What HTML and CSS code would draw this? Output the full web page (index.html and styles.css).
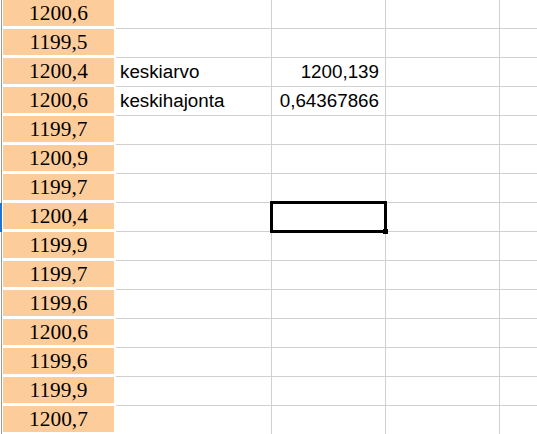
FILE: index.html
```html
<!DOCTYPE html>
<html lang="fi">
<head>
<meta charset="utf-8">
<title>Taulukko</title>
<link rel="stylesheet" href="styles.css">
</head>
<body>
<div class="sheet">
  <div class="row"><div class="hdr"></div><div class="a"><div class="fill">1200,6</div></div><div class="c b"></div><div class="c n"></div><div class="c"></div><div class="c e"></div></div>
  <div class="row"><div class="hdr"></div><div class="a"><div class="fill">1199,5</div></div><div class="c b"></div><div class="c n"></div><div class="c"></div><div class="c e"></div></div>
  <div class="row"><div class="hdr"></div><div class="a"><div class="fill">1200,4</div></div><div class="c b">keskiarvo</div><div class="c n">1200,139</div><div class="c"></div><div class="c e"></div></div>
  <div class="row"><div class="hdr"></div><div class="a"><div class="fill">1200,6</div></div><div class="c b">keskihajonta</div><div class="c n">0,64367866</div><div class="c"></div><div class="c e"></div></div>
  <div class="row"><div class="hdr"></div><div class="a"><div class="fill">1199,7</div></div><div class="c b"></div><div class="c n"></div><div class="c"></div><div class="c e"></div></div>
  <div class="row"><div class="hdr"></div><div class="a"><div class="fill">1200,9</div></div><div class="c b"></div><div class="c n"></div><div class="c"></div><div class="c e"></div></div>
  <div class="row"><div class="hdr"></div><div class="a"><div class="fill">1199,7</div></div><div class="c b"></div><div class="c n"></div><div class="c"></div><div class="c e"></div></div>
  <div class="row"><div class="hdr active"></div><div class="a"><div class="fill">1200,4</div></div><div class="c b"></div><div class="c n"></div><div class="c"></div><div class="c e"></div></div>
  <div class="row"><div class="hdr"></div><div class="a"><div class="fill">1199,9</div></div><div class="c b"></div><div class="c n"></div><div class="c"></div><div class="c e"></div></div>
  <div class="row"><div class="hdr"></div><div class="a"><div class="fill">1199,7</div></div><div class="c b"></div><div class="c n"></div><div class="c"></div><div class="c e"></div></div>
  <div class="row"><div class="hdr"></div><div class="a"><div class="fill">1199,6</div></div><div class="c b"></div><div class="c n"></div><div class="c"></div><div class="c e"></div></div>
  <div class="row"><div class="hdr"></div><div class="a"><div class="fill">1200,6</div></div><div class="c b"></div><div class="c n"></div><div class="c"></div><div class="c e"></div></div>
  <div class="row"><div class="hdr"></div><div class="a"><div class="fill">1199,6</div></div><div class="c b"></div><div class="c n"></div><div class="c"></div><div class="c e"></div></div>
  <div class="row"><div class="hdr"></div><div class="a"><div class="fill">1199,9</div></div><div class="c b"></div><div class="c n"></div><div class="c"></div><div class="c e"></div></div>
  <div class="row"><div class="hdr"></div><div class="a"><div class="fill">1200,7</div></div><div class="c b"></div><div class="c n"></div><div class="c"></div><div class="c e"></div></div>
  <div class="selection"><span class="handle"></span></div>
</div>
</body>
</html>
```

FILE: styles.css
```css
html, body {
  margin: 0;
  padding: 0;
  background: #ffffff;
  overflow: hidden;
}

.sheet {
  position: relative;
  width: 537px;
  height: 434px;
  overflow: hidden;
}

.row {
  display: grid;
  grid-template-columns: 3px 113px 156px 114px 114px 37px;
  height: 29px;
}

.hdr {
  box-sizing: border-box;
  border-left: 1px solid #ffffff;
  border-right: 1px solid #ffffff;
  background: #9a9a9a;
  height: 29px;
}

.hdr.active {
  border-left: 0;
  border-right: 1px solid #ffffff;
  background: #1f74cf;
  height: 29px;
}

.a {
  box-sizing: border-box;
  height: 29px;
  background: #ffffff;
}

.fill {
  width: 111px;
  height: 26px;
  background: #fdcc9b;
  font-family: "Liberation Serif", "Times New Roman", serif;
  font-size: 21.4px;
  line-height: 27px;
  text-align: center;
  color: #000000;
  overflow: hidden;
}

.c {
  box-sizing: border-box;
  height: 29px;
  border-right: 1px solid #d0d0d0;
  border-bottom: 1px solid #d0d0d0;
  font-family: "Liberation Sans", Arial, sans-serif;
  font-size: 18.8px;
  line-height: 28px;
  color: #000000;
  white-space: nowrap;
  overflow: hidden;
}

.b {
  padding-left: 4px;
}

.n {
  text-align: right;
  padding-right: 6px;
}

.e {
  border-right: 0;
}

.selection {
  position: absolute;
  left: 270px;
  top: 201px;
  width: 117px;
  height: 32px;
  box-sizing: border-box;
  border: 3px solid #000000;
}

.handle {
  position: absolute;
  right: -4px;
  bottom: -4px;
  width: 5px;
  height: 5px;
  background: #000000;
}
```
